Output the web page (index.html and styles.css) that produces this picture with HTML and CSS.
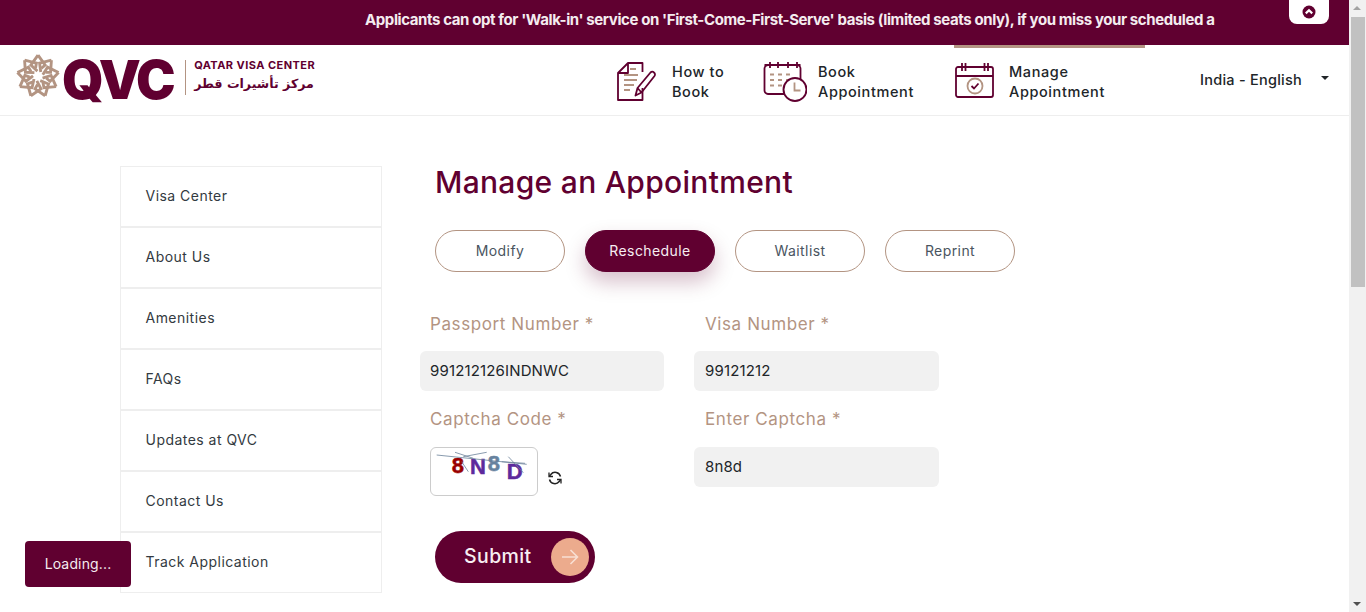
FILE: index.html
```html
<!DOCTYPE html>
<html lang="en">
<head>
<meta charset="utf-8">
<title>Manage an Appointment</title>
<link rel="stylesheet" href="styles.css">
</head>
<body>
<div class="page">
  <div class="main">
    <div class="notice">
      <div class="notice-text">Applicants can opt for 'Walk-in' service on 'First-Come-First-Serve' basis (limited seats only), if you miss your scheduled a</div>
      <div class="notice-tab">
        <svg class="notice-icon" viewBox="0 0 14 14"><circle cx="7" cy="7" r="6.5" fill="#600030"/><path d="M3.8 8.4 7 5.2l3.2 3.2" fill="none" stroke="#fff" stroke-width="2.2"/></svg>
      </div>
    </div>
    <header class="header">
      <div class="logo">
        <svg class="logo-star" viewBox="2 4 40 45.45">
          <defs><g id="arm"><path d="M22 3 15.5 12l6 5.500M22 3l6.500 9-3.500 3" fill="none" stroke="#b39482" stroke-width="2.600"/></g></defs>
          <g transform="translate(0 3)">
            <use href="#arm"/>
            <use href="#arm" transform="rotate(40 22 22)"/>
            <use href="#arm" transform="rotate(80 22 22)"/>
            <use href="#arm" transform="rotate(120 22 22)"/>
            <use href="#arm" transform="rotate(160 22 22)"/>
            <use href="#arm" transform="rotate(200 22 22)"/>
            <use href="#arm" transform="rotate(240 22 22)"/>
            <use href="#arm" transform="rotate(280 22 22)"/>
            <use href="#arm" transform="rotate(320 22 22)"/>
          </g>
        </svg>
        <span class="logo-qvc">QVC</span>
        <span class="logo-rule"></span>
        <div class="logo-name">
          <span class="logo-en">QATAR VISA CENTER</span>
          <span class="logo-ar" dir="rtl" lang="ar">مركز تأشيرات قطر</span>
        </div>
      </div>
      <nav class="nav">
        <a class="nav-item nav-first">
          <svg class="nav-icon" viewBox="0 0 40 40" fill="none">
            <path d="M11 1h14.500v9M25.500 26v12H1V11L11 1v10H1" stroke="#600030" stroke-width="1.800" stroke-linejoin="round"/>
            <path d="M13 7h6M7 13h14M7 18h13M7 23h10M7 28h6" stroke="#b39482" stroke-width="1.800"/>
            <path d="M18.500 33.500 20.500 26 33.500 10.500a2.500 2.500 0 0 1 3.500 0 2.500 2.500 0 0 1 .500 3.500L24.500 30.500ZM20.500 26l4 4.500" stroke="#600030" stroke-width="1.800" stroke-linejoin="round"/>
          </svg>
          <span class="nav-label">How to<br>Book</span>
        </a>
        <a class="nav-item nav-second">
          <svg class="nav-icon nav-icon-wide" viewBox="0 0 44 41" fill="none">
            <rect x="1.500" y="3" width="36" height="29" rx="3.500" stroke="#600030" stroke-width="1.800"/>
            <path d="M7 0v6M15 0v6M25 0v6M34 0v6M1.500 3h36" stroke="#600030" stroke-width="1.800"/>
            <path d="M7 12.500h4M15 12.500h4M23 12.500h4M7 18h4M15 18h4M23 18h4M7 23.500h4M15 23.500h4" stroke="#b39482" stroke-width="1.800"/>
            <circle cx="32" cy="27.500" r="11.500" fill="#fff" stroke="#600030" stroke-width="1.900"/>
            <path d="M31.500 20.500v8h6" stroke="#b39482" stroke-width="1.800"/>
          </svg>
          <span class="nav-label">Book<br>Appointment</span>
        </a>
        <a class="nav-item nav-active">
          <svg class="nav-icon" viewBox="0 0 40 40" fill="none">
            <rect x="1" y="5" width="37" height="30" rx="2" stroke="#600030" stroke-width="1.800"/>
            <path d="M7 1v8M10.500 1v8M29.500 1v8M33 1v8M1 14h37" stroke="#600030" stroke-width="1.800"/>
            <circle cx="20" cy="24" r="7.500" stroke="#b39482" stroke-width="1.800"/>
            <path d="m16.500 24 2.500 2.500 4.500-5" stroke="#600030" stroke-width="1.800"/>
          </svg>
          <span class="nav-label">Manage<br>Appointment</span>
        </a>
        <div class="lang"><span>India - English</span><i class="caret"></i></div>
      </nav>
    </header>
    <div class="content">
      <aside class="side">
        <a class="side-item">Visa Center</a>
        <a class="side-item">About Us</a>
        <a class="side-item">Amenities</a>
        <a class="side-item">FAQs</a>
        <a class="side-item">Updates at QVC</a>
        <a class="side-item">Contact Us</a>
        <a class="side-item">Track Application</a>
      </aside>
      <section class="panel">
        <h1 class="title">Manage an Appointment</h1>
        <div class="pills">
          <button class="pill">Modify</button>
          <button class="pill pill-on">Reschedule</button>
          <button class="pill">Waitlist</button>
          <button class="pill">Reprint</button>
        </div>
        <form class="form">
          <div class="field field-top">
            <label class="field-label">Passport Number *</label>
            <input class="field-input" value="991212126INDNWC">
          </div>
          <div class="field field-top field-right">
            <label class="field-label">Visa Number *</label>
            <input class="field-input" value="99121212">
          </div>
          <div class="field">
            <label class="field-label">Captcha Code *</label>
            <div class="captcha-row">
              <div class="captcha">
                <svg class="captcha-pic" viewBox="0 0 106 47">
                  <text class="cap-a" x="20.700" y="24.700">8</text>
                  <text class="cap-b" x="39" y="26">N</text>
                  <text class="cap-c" x="56.700" y="22.700">8</text>
                  <text class="cap-b" x="75.700" y="31.300">D</text>
                  <path d="M5.700 7 95.700 16.300M24 4.300l18.300 6M32.300 8.700 55.700 4.300M30.700 13.700l6.600 10M70.700 13.700 94 15.300M77.300 8.700l15 16" stroke="#6b8299" stroke-width=".8" fill="none"/>
                </svg>
              </div>
              <svg class="refresh" viewBox="0 0 14 14" fill="none">
                <path d="M12.500 5.500A5.500 5.500 0 0 0 2.800 3.500L1.500 5M1.500 8.500a5.500 5.500 0 0 0 9.700 2L12.500 9" stroke="#222" stroke-width="1.500"/>
                <path d="M1 1.500V5.500H5M13 12.500V8.500H9" stroke="#222" stroke-width="1.300"/>
              </svg>
            </div>
          </div>
          <div class="field field-right">
            <label class="field-label">Enter Captcha *</label>
            <input class="field-input" value="8n8d">
          </div>
        </form>
        <button class="submit">
          <span class="submit-text">Submit</span>
          <span class="submit-dot">
            <svg class="submit-arrow" viewBox="0 0 20 20" fill="none"><path d="M2 10h15.500M10.500 3l7 7-7 7" stroke="#f8dfd3" stroke-width="1.600"/></svg>
          </span>
        </button>
      </section>
    </div>
  </div>
  <div class="scrollbar">
    <i class="sb-up"></i>
    <div class="sb-thumb"></div>
    <i class="sb-down"></i>
  </div>
</div>
<div class="toast">Loading...</div>
</body>
</html>
```
FILE: styles.css
```css
* { box-sizing: border-box; }
html, body { margin: 0; height: 612px; overflow: hidden; background: #fff; }
body { font-family: Inter, "Liberation Sans", sans-serif; color: #212529; }
.page { display: flex; height: 612px; }
.main { width: 1349px; flex: none; display: flex; flex-direction: column; overflow: hidden; }

.notice { height: 45px; flex: none; background: #600030; display: flex; align-items: flex-start; padding-left: 365px; }
.notice-text { width: 850px; flex: none; white-space: nowrap; color: #f4ecef; font-size: 15px; font-weight: 700; line-height: 40px; letter-spacing: -.4px; }
.notice-tab { width: 40px; height: 24px; margin-left: 74px; background: #fff; border-radius: 0 0 8px 8px; display: flex; align-items: center; justify-content: center; }
.notice-icon { width: 14px; height: 14px; }

.header { height: 71px; flex: none; display: flex; border-bottom: 1px solid #eee; }
.logo { width: 617px; flex: none; padding-left: 16px; display: flex; align-items: center; }
.logo-star { width: 44px; height: 50px; flex: none; margin-top: -4px; }
.logo-qvc { margin-left: 2px; font-size: 53px; font-weight: 900; line-height: 60px; color: #600030; letter-spacing: -2.500px; }
.logo-rule { width: 1px; height: 35px; background: #b39482; margin-left: 12px; margin-top: -5px; }
.logo-name { margin-left: 8px; margin-top: -6px; display: flex; flex-direction: column; }
.logo-en { font-size: 11px; font-weight: 700; line-height: 14px; color: #600030; letter-spacing: .45px; white-space: nowrap; }
.logo-ar { font-family: "DejaVu Sans", sans-serif; font-size: 12.600px; font-weight: 700; line-height: 24px; color: #600030; text-align: left; white-space: nowrap; }

.nav { display: flex; flex: none; }
.nav-item { display: flex; align-items: center; height: 70px; padding-top: 4px; color: #212529; }
.nav-first { width: 146px; }
.nav-second { width: 191px; }
.nav-active { width: 191px; padding-left: 1px; position: relative; }
.nav-active::before { content: ""; position: absolute; left: 0; right: 0; top: 0; height: 3px; background: #b39482; }
.nav-icon { width: 40px; height: 40px; flex: none; }
.nav-icon-wide { width: 44px; height: 41px; }
.nav-label { margin-left: 15px; font-size: 14.500px; font-weight: 500; line-height: 20px; letter-spacing: .6px; }
.nav-second .nav-label { margin-left: 11px; }
.nav-active .nav-label { margin-left: 14px; }
.lang { margin-left: 55px; height: 70px; padding-bottom: 2px; display: flex; align-items: center; font-size: 14.500px; font-weight: 500; letter-spacing: .25px; white-space: nowrap; }
.caret { width: 0; height: 0; margin-left: 19px; margin-top: -3px; border-left: 4.500px solid transparent; border-right: 4.500px solid transparent; border-top: 4.500px solid #212529; }

.content { display: flex; padding: 50px 0 0 120px; }
.side { width: 262px; flex: none; display: flex; flex-direction: column; }
.side-item { height: 61px; flex: none; padding: 0 0 2px 24.500px; border: 1px solid #eee; display: flex; align-items: center; font-size: 14px; letter-spacing: .47px; color: #333a41; }
.panel { margin-left: 38px; display: flex; flex-direction: column; align-items: flex-start; }
.title { margin: 0 0 32px 15px; font-size: 30px; font-weight: 500; line-height: 32px; color: #600030; letter-spacing: .3px; white-space: nowrap; }
.pills { margin-left: 15px; display: flex; gap: 20px; }
.pill { width: 130px; height: 42px; padding: 0 0 2px; background: #fff; border: 1px solid #b39482; border-radius: 21px; font: 400 14px Inter, "Liberation Sans", sans-serif; letter-spacing: .42px; color: #4a555f; }
.pill-on { background: #600030; border-color: #600030; color: #f7eef2; box-shadow: 0 10px 20px rgba(96, 0, 48, .25); }
.form { margin-top: 40px; display: grid; grid-template-columns: 244px 245px; column-gap: 30px; row-gap: 16px; }
.field { display: flex; flex-direction: column; gap: 15px; }
.field-top { gap: 14px; }
.field-label { padding-left: 10px; height: 25px; line-height: 25px; font-size: 17px; color: #b39482; letter-spacing: .6px; white-space: nowrap; }
.field-right .field-label { padding-left: 11px; }
.field-input { width: 100%; height: 40px; padding: 0 10px 2px; border: 0; border-radius: 6px; background: #f1f1f1; font: 400 15px Inter, "Liberation Sans", sans-serif; letter-spacing: .15px; color: #212529; }
.field-right .field-input { padding-left: 11px; }
.captcha-row { display: flex; align-items: flex-end; padding-left: 10px; height: 49px; }
.captcha { width: 108px; height: 49px; border: 1px solid #ccc; border-radius: 6px; background: #fff; }
.captcha-pic { width: 106px; height: 47px; display: block; }
.cap-a, .cap-b, .cap-c { font-family: "Liberation Sans", sans-serif; font-weight: 700; font-size: 22px; stroke-width: .5px; }
.cap-a { fill: #990000; stroke: #990000; }
.cap-b { fill: #5d2a9c; stroke: #5d2a9c; }
.cap-c { fill: #67829e; stroke: #67829e; }
.refresh { width: 14px; height: 14px; margin: 0 0 11px 10px; flex: none; }
.submit { margin: 35px 0 0 15px; width: 160px; height: 52px; padding: 0 6px 0 29px; border: 0; border-radius: 26px; background: #600030; display: flex; align-items: center; justify-content: space-between; font: 500 19.500px Inter, "Liberation Sans", sans-serif; color: #f7eef2; letter-spacing: .4px; }
.submit-text { padding-bottom: 2px; }
.submit-dot { width: 38px; height: 38px; border-radius: 50%; background: #ecab8d; display: flex; align-items: center; justify-content: center; }
.submit-arrow { width: 20px; height: 20px; }

.scrollbar { width: 17px; flex: none; height: 612px; background: #f1f1f1; position: relative; }
.sb-thumb { position: absolute; top: 17px; left: 2px; width: 14px; height: 270px; background: #c1c1c1; }
.sb-up { position: absolute; top: 6px; left: 4px; width: 0; height: 0; border-left: 4px solid transparent; border-right: 4px solid transparent; border-bottom: 4px solid #a3a3a3; }
.sb-down { position: absolute; bottom: 6px; left: 4px; width: 0; height: 0; border-left: 4px solid transparent; border-right: 4px solid transparent; border-top: 4px solid #505050; }

.toast { position: fixed; left: 25px; top: 541px; width: 106px; height: 46px; padding-bottom: 1px; border-radius: 4px; background: #600030; color: #f4ecef; display: flex; align-items: center; justify-content: center; font-size: 14px; letter-spacing: .15px; }
```
